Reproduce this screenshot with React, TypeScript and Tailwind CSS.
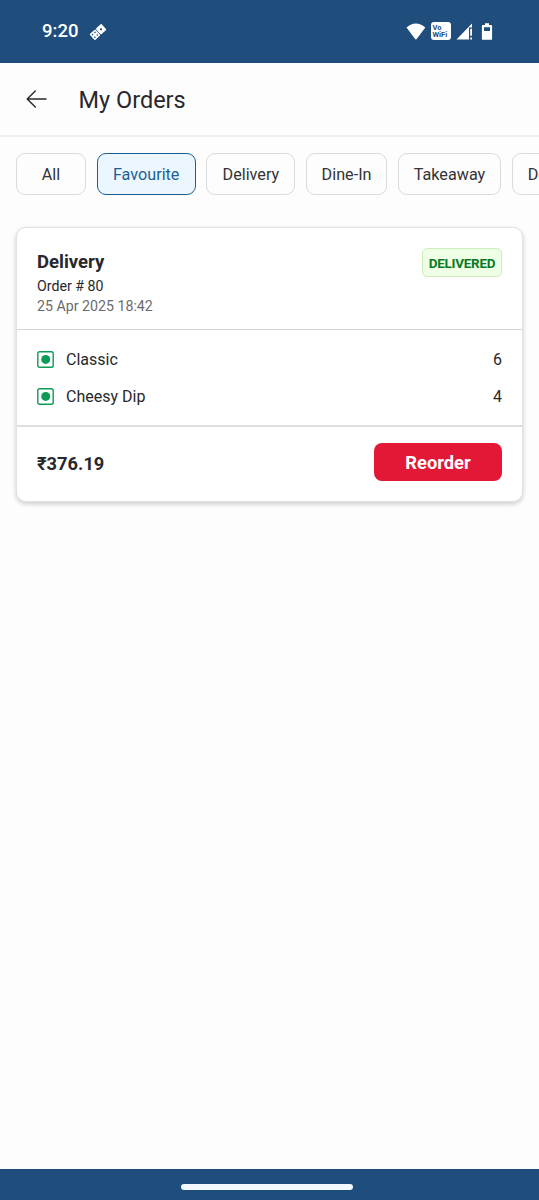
import clsx from "clsx";

const filters = [
  { label: "All", width: "w-[70px]" },
  { label: "Favourite", width: "w-[99px]" },
  { label: "Delivery", width: "w-[89px]" },
  { label: "Dine-In", width: "w-[81px]" },
  { label: "Takeaway", width: "w-[103.5px]" },
  { label: "Delivered", width: "w-[98px]" },
];

const items = [
  { name: "Classic", quantity: 6 },
  { name: "Cheesy Dip", quantity: 4 },
];

function GameIcon() {
  return (
    <svg className="ml-[11px] h-[18px] w-[18px]" viewBox="0 0 18 18">
      <g transform="rotate(-42 9 9)">
        <rect x="1" y="5" width="7.7" height="8" rx="1" fill="#fff" />
        <rect x="9.3" y="5" width="7.7" height="8" rx="1" fill="#fff" />
        <g fill="#1f4e7c">
          <circle cx="3.2" cy="7.2" r=".8" />
          <circle cx="6.5" cy="7.2" r=".8" />
          <circle cx="3.2" cy="10.8" r=".8" />
          <circle cx="6.5" cy="10.8" r=".8" />
          <circle cx="13.1" cy="9" r="1.1" />
        </g>
      </g>
    </svg>
  );
}

function StatusBar() {
  return (
    <div className="flex h-[63px] shrink-0 items-center bg-[#1f4e7c] pr-[46px] pl-[42px] text-white">
      <span className="text-[18.5px] font-medium">9:20</span>
      <GameIcon />
      <div className="ml-auto flex items-center">
        <svg className="h-[18px] w-[20px]" viewBox="0 0 20 18" fill="#fff">
          <path d="M.5 4.6Q9.8-3.6 19.3 4.6L10.7 16.1q-.8.9-1.6 0Z" />
        </svg>
        <div className="mb-px ml-[5px] flex h-[18px] w-[20px] flex-col justify-center rounded-[3px] bg-white pl-[1.5px] text-[7.5px] leading-[7.5px] font-bold text-[#1f4e7c]">
          <span>Vo</span>
          <span>WiFi</span>
        </div>
        <svg className="ml-[5px] h-[18px] w-[18px]" viewBox="0 0 18 18" fill="#fff">
          <path d="M.5 16.5 16 .6V4.5h-3v12Z" />
          <path d="M14.2 5.7H16v7h-1.8zM14.2 14.5H16v2h-1.8z" />
        </svg>
        <svg className="ml-[7px] h-[18px] w-[12px]" viewBox="0 0 12 18" fill="#fff">
          <path
            fillRule="evenodd"
            d="M4 .3h4V2h2.200q.9 0 .9.900v13q0 .9-.9.900H1.800q-.9 0-.9-.9v-13q0-.9.900-.9H4zM3 4.200V8h6V4.200z"
          />
        </svg>
      </div>
    </div>
  );
}

function Header() {
  return (
    <header className="flex h-[74px] shrink-0 items-center border-b-2 border-[#efefef] pl-[26px]">
      <svg
        className="h-[20px] w-[21px]"
        viewBox="0 0 21 20"
        fill="none"
        stroke="#28282c"
        strokeWidth="1.4"
        strokeLinecap="round"
        strokeLinejoin="round"
      >
        <path d="M20 10H1.2M9.3 2 1.2 10l8.1 8" />
      </svg>
      <h1 className="mt-[3px] ml-[31.5px] text-[23.5px] text-[#28282c]">My Orders</h1>
    </header>
  );
}

function VegIcon() {
  return (
    <svg className="h-[17px] w-[17px]" viewBox="0 0 17 17">
      <rect x=".8" y=".8" width="15.4" height="15.4" rx="1.8" fill="none" stroke="#0e9b55" strokeWidth="1.4" />
      <circle cx="8.7" cy="8.4" r="4.5" fill="#0e9b55" />
    </svg>
  );
}

function OrderCard() {
  return (
    <article className="mx-4 mt-8 rounded-[10px] border border-[#e2e2e2] bg-white text-[#28282c] shadow-[0_2px_5px_rgba(0,0,0,0.2)]">
      <div className="flex h-[101px] items-start justify-between px-5 pt-5">
        <div>
          <h2 className="pt-px text-[18.5px] leading-[27px] font-bold">Delivery</h2>
          <p className="text-[14.2px] leading-[20px]">Order # 80</p>
          <p className="text-[14.2px] leading-[21px] text-[#6b6b6b]">25 Apr 2025 18:42</p>
        </div>
        <span className="flex h-[29px] w-[80px] items-center justify-center rounded-[5px] border border-[#cdeebb] bg-[#efffe6] pt-px text-[13.5px] font-bold tracking-[-0.3px] text-[#0b7a1e]">
          DELIVERED
        </span>
      </div>
      <ul className="flex h-[98px] flex-col justify-center border-t border-b-2 border-t-[#d4d4d4] border-b-[#dedede] px-5 text-[16px]">
        {items.map((item) => (
          <li key={item.name} className="flex h-[37px] items-center">
            <VegIcon />
            <span className="ml-3 pt-[2px]">{item.name}</span>
            <span className="ml-auto pt-[2px]">{item.quantity}</span>
          </li>
        ))}
      </ul>
      <div className="flex h-[74px] items-center justify-between px-5 pb-1">
        <p className="pt-[3px] text-[18.3px] font-bold">₹376.19</p>
        <button className="h-[38px] w-[128px] rounded-[8px] bg-[#e31837] pt-px text-[18.3px] font-bold text-white">
          Reorder
        </button>
      </div>
    </article>
  );
}

export default function App() {
  return (
    <div className="flex h-[1200px] w-[539px] flex-col overflow-hidden bg-[#fdfdfd] font-[Roboto,sans-serif]">
      <StatusBar />
      <Header />
      <nav className="mt-4 flex shrink-0 gap-[10.7px] overflow-hidden pl-4">
        {filters.map(({ label, width }) => (
          <button
            key={label}
            className={clsx(
              "h-[42px] shrink-0 rounded-[9px] border-[1.5px] pt-[3px] text-[16.2px]",
              width,
              label === "Favourite"
                ? "border-[#1d5f93] bg-[#ebf6ff] text-[#1d5f93]"
                : "border-[#dadada] text-[#333336]"
            )}
          >
            {label}
          </button>
        ))}
      </nav>
      <main className="flex-1">
        <OrderCard />
      </main>
      <footer className="flex h-[31px] shrink-0 items-center justify-center bg-[#1f4e7c]">
        <div className="mt-1 mr-[5px] h-[6px] w-[172px] rounded-full bg-[#f4f8ff]" />
      </footer>
    </div>
  );
}
